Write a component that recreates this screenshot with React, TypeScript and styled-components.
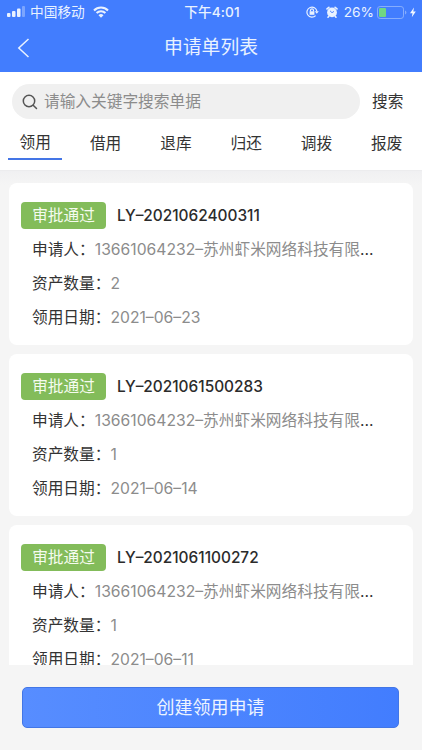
import React from 'react';
import styled, { createGlobalStyle } from 'styled-components';

const GlobalStyle = createGlobalStyle`
  * { box-sizing: border-box; }
  body {
    margin: 0;
    background: #f5f5f5;
    font-family: Inter, "Noto Sans CJK SC", sans-serif;
    color: #333;
  }
  button, input { font: inherit; }
`;

const Screen = styled.div`
  display: flex;
  flex-direction: column;
  width: 422px;
  height: 750px;
  overflow: hidden;
  background: #f5f5f5;
`;

const Header = styled.header`
  flex: none;
  height: 72px;
  background: #427dfe;
  color: #e9f2ff;
`;

const StatusBar = styled.div`
  display: grid;
  grid-template-columns: 1fr auto 1fr;
  align-items: center;
  height: 24px;
  padding: 0 5px 0 7px;
  font-size: 13.7px;
  line-height: 24px;
`;

const StatusGroup = styled.div<{ $end?: boolean }>`
  display: flex;
  align-items: center;
  justify-content: ${(p) => (p.$end ? 'flex-end' : 'flex-start')};
  svg { flex: none; display: block; }
`;

const Carrier = styled.span`
  margin: 0 8px 0 5px;
`;

const Clock = styled.span`
  font-weight: 500;
  letter-spacing: 0.1px;
`;

const Percent = styled.span`
  margin: 0 3px 0 6px;
`;

const NavBar = styled.div`
  display: grid;
  grid-template-columns: 48px 1fr 48px;
  align-items: center;
  height: 48px;
`;

const BackButton = styled.button`
  display: flex;
  padding: 0 0 0 17px;
  border: 0;
  background: none;
  color: inherit;
`;

const Title = styled.h1`
  margin: 0;
  text-align: center;
  font-size: 18.8px;
  line-height: 48px;
  font-weight: 400;
`;

const Filters = styled.section`
  flex: none;
  height: 99px;
  padding-top: 12px;
  background: #fff;
  border-bottom: 1px solid #ececee;
`;

const SearchRow = styled.div`
  display: flex;
  align-items: center;
  height: 35px;
  padding-left: 12px;
`;

const SearchField = styled.label`
  display: flex;
  align-items: center;
  gap: 6px;
  width: 348px;
  height: 35px;
  padding-left: 10px;
  border-radius: 18px;
  background: #f0f0f0;
  color: #555;
`;

const SearchInput = styled.input`
  flex: 1;
  min-width: 0;
  padding: 0;
  border: 0;
  outline: 0;
  background: none;
  font-size: 15.7px;
  &::placeholder { color: #8c8c8c; opacity: 1; }
`;

const SearchButton = styled.button`
  padding: 0;
  margin-left: 12px;
  border: 0;
  background: none;
  color: #333;
  font-size: 15.7px;
  line-height: 34px;
`;

const Tabs = styled.nav`
  display: flex;
  height: 42px;
  padding-top: 9px;
`;

const Tab = styled.button<{ $active?: boolean }>`
  flex: none;
  width: 54px;
  height: 32px;
  margin: 0 8px 0 8.3px;
  padding: ${(p) => (p.$active ? '0 0 1px' : '2px 0 0')};
  border: 0;
  border-bottom: 2px solid ${(p) => (p.$active ? '#4475e6' : 'transparent')};
  background: none;
  color: #333;
  font-size: 15.7px;
  line-height: 28px;
`;

const List = styled.main`
  flex: none;
  display: flex;
  flex-direction: column;
  gap: 9px;
  height: 494px;
  padding: 12px 9px 0;
  overflow: hidden;
  background: linear-gradient(#f0f0f2, #f5f5f5 14px);
`;

const Card = styled.article`
  flex: none;
  height: 162px;
  padding: 19px 20px 0 12px;
  border-radius: 8px;
  background: #fff;
`;

const CardHead = styled.div`
  display: flex;
  align-items: center;
  height: 27px;
  margin-bottom: 4px;
`;

const Status = styled.span`
  width: 85px;
  height: 27px;
  margin-right: 11px;
  border-radius: 4px;
  background: #83bc5a;
  color: #f5fbef;
  text-align: center;
  font-size: 15.7px;
  line-height: 28px;
`;

const Code = styled.span`
  font-size: 15.4px;
  font-weight: 500;
  color: #2b2b2b;
  white-space: nowrap;
`;

const Field = styled.div`
  height: 33.8px;
  padding-left: 11px;
  white-space: nowrap;
  font-size: 15.7px;
  line-height: 34px;
`;

const Value = styled.span`
  color: #8c8c8c;
`;

const Footer = styled.footer`
  padding: 22px 23px 0 22px;
`;

const CreateButton = styled.button`
  display: block;
  width: 100%;
  height: 41px;
  padding: 0;
  border: 1px solid #4276e6;
  border-radius: 5px;
  background: linear-gradient(90deg, #578dff, #427dfe);
  color: #edf4ff;
  font-size: 18px;
  line-height: 38px;
`;

const SignalIcon = () => (
  <svg width="18" height="12" viewBox="0 0 18 12" fill="#e9f2ff">
    <rect x="0" y="7" width="3.5" height="4" rx="1" />
    <rect x="5" y="5" width="3.5" height="6" rx="1" />
    <rect x="10" y="2.5" width="3.5" height="8.5" rx="1" />
    <rect x="15" y="0" width="3" height="11" rx="1" opacity=".35" />
  </svg>
);

const WifiIcon = () => (
  <svg width="16" height="12" viewBox="0 0 16 12" fill="none" stroke="#e9f2ff" strokeWidth="2.1">
    <path d="M1 4.4a10 10 0 0 1 14 0M3.6 7.1a6.2 6.2 0 0 1 8.8 0" />
    <path d="M5.5 9.2a3.6 3.6 0 0 1 5 0L8 11.7z" fill="#e9f2ff" stroke="none" />
  </svg>
);

const RotationLockIcon = () => (
  <svg width="13" height="12" viewBox="0 0 13 12" fill="none" stroke="#e9f2ff" strokeWidth="1.2">
    <path d="M9.6 9.6A5 5 0 1 1 10.9 5.4" />
    <path d="M8.8 5.2h4l-2 2.6z" fill="#e9f2ff" stroke="none" />
    <rect x="3.6" y="5.3" width="4.8" height="3.5" fill="#e9f2ff" stroke="none" />
    <path d="M4.5 5.6V4.3a1.5 1.5 0 0 1 3 0v1.3" />
  </svg>
);

const AlarmIcon = () => (
  <svg width="12" height="12" viewBox="0 0 12 12" fill="none">
    <circle cx="6" cy="6.4" r="4.9" fill="#e9f2ff" />
    <path d="M1 2.9 2.9 1.3M11 2.9 9.1 1.3M2.8 10.3l-.8.9M9.2 10.3l.8.9" stroke="#e9f2ff" strokeWidth="1.6" strokeLinecap="round" />
    <path d="M4 4.8 6 6.7l2-1.3" stroke="#427dfe" strokeWidth=".9" />
  </svg>
);

const BatteryIcon = () => (
  <svg width="40" height="13" viewBox="0 0 40 13" fill="none">
    <rect x=".5" y=".5" width="26" height="12" rx="2.6" stroke="#86adfd" />
    <rect x="2" y="2" width="7" height="9" rx="1" fill="#70d783" />
    <path d="M28 4.4q1.4.4 1.4 2.1T28 8.6z" fill="#86adfd" />
    <path d="M37 1.6 33 7.2h2.5L34.8 11.3 38.8 5.5h-2.5z" fill="#f3f8ff" />
  </svg>
);

const StatusIcons = styled.span`
  display: flex;
  gap: 7px;
`;

const BackIcon = () => (
  <svg width="13" height="20" viewBox="0 0 13 20" fill="none" stroke="currentColor" strokeWidth="1.5">
    <path d="M11.5 1 1.8 10l9.7 9" />
  </svg>
);

const SearchIcon = () => (
  <svg width="16" height="16" viewBox="0 0 16 16" fill="none" stroke="currentColor" strokeWidth="1.5" strokeLinecap="round">
    <circle cx="7" cy="7" r="5.7" />
    <path d="m11.2 11.2 3.3 3.3" />
  </svg>
);

const tabs = ['领用', '借用', '退库', '归还', '调拨', '报废'];

const requests = [
  { code: 'LY–2021062400311', count: '2', date: '2021–06–23' },
  { code: 'LY–2021061500283', count: '1', date: '2021–06–14' },
  { code: 'LY–2021061100272', count: '1', date: '2021–06–11' },
];

export default function App() {
  return (
    <Screen>
      <GlobalStyle />
      <Header>
        <StatusBar>
          <StatusGroup>
            <SignalIcon />
            <Carrier>中国移动</Carrier>
            <WifiIcon />
          </StatusGroup>
          <Clock>下午4:01</Clock>
          <StatusGroup $end>
            <StatusIcons>
              <RotationLockIcon />
              <AlarmIcon />
            </StatusIcons>
            <Percent>26%</Percent>
            <BatteryIcon />
          </StatusGroup>
        </StatusBar>
        <NavBar>
          <BackButton aria-label="返回"><BackIcon /></BackButton>
          <Title>申请单列表</Title>
        </NavBar>
      </Header>
      <Filters>
        <SearchRow>
          <SearchField>
            <SearchIcon />
            <SearchInput placeholder="请输入关键字搜索单据" />
          </SearchField>
          <SearchButton>搜索</SearchButton>
        </SearchRow>
        <Tabs>
          {tabs.map((name, i) => (
            <Tab key={name} $active={i === 0}>{name}</Tab>
          ))}
        </Tabs>
      </Filters>
      <List>
        {requests.map((r) => (
          <Card key={r.code}>
            <CardHead>
              <Status>审批通过</Status>
              <Code>{r.code}</Code>
            </CardHead>
            <Field>申请人：<Value>13661064232–苏州虾米网络科技有限</Value>...</Field>
            <Field>资产数量：<Value>{r.count}</Value></Field>
            <Field>领用日期：<Value>{r.date}</Value></Field>
          </Card>
        ))}
      </List>
      <Footer>
        <CreateButton>创建领用申请</CreateButton>
      </Footer>
    </Screen>
  );
}
